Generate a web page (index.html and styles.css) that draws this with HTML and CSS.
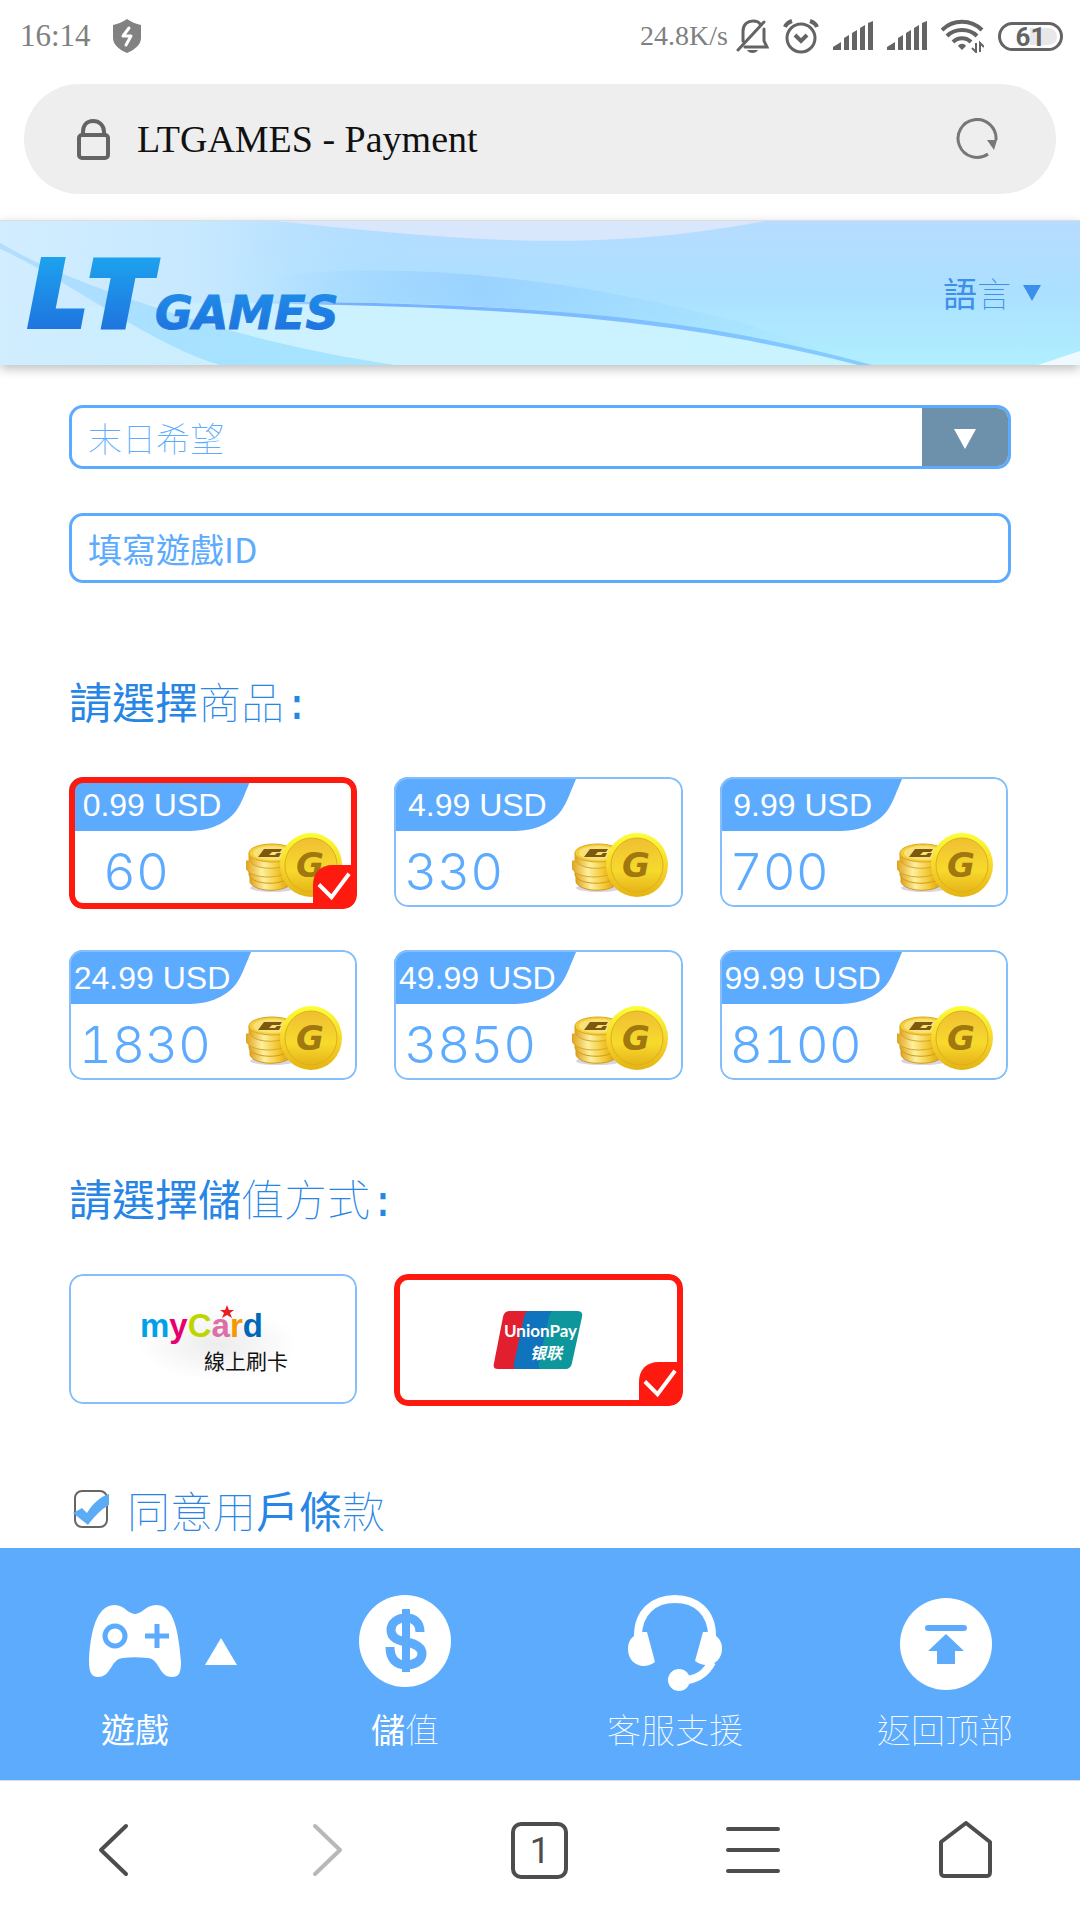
FILE: index.html
```
<!DOCTYPE html>
<html lang="zh-Hant">

<head>
  <meta charset="UTF-8">
  <meta name="viewport" content="width=device-width, initial-scale=1.0">
  <title>LTGAMES - Payment</title>
  <link rel="stylesheet" href="styles.css">
</head>

<body>
  <!-- Shared icons -->
  <svg class="sprite" aria-hidden="true">
    <defs>
      <linearGradient id="coin-rim" x1="0" y1="0" x2="0" y2="1">
        <stop offset="0" stop-color="#fbff35" />
        <stop offset="0.6" stop-color="#f5d02a" />
        <stop offset="1" stop-color="#e3b410" />
      </linearGradient>
      <linearGradient id="coin-face" x1="0" y1="0" x2="0" y2="1">
        <stop offset="0" stop-color="#efbf33" />
        <stop offset="0.6" stop-color="#f7da2c" />
        <stop offset="1" stop-color="#e6b41a" />
      </linearGradient>
      <linearGradient id="coin-side" x1="0" y1="0" x2="1" y2="0">
        <stop offset="0" stop-color="#e0a21c" />
        <stop offset="0.35" stop-color="#fdf0a0" />
        <stop offset="0.7" stop-color="#f2c62e" />
        <stop offset="1" stop-color="#d39412" />
      </linearGradient>
    </defs>
    <symbol id="tab" viewBox="0 0 183 54">
      <path d="M0 0H183C177 13 173 26 167 34C155 49 137 54 118 54H0Z" fill="#5cabfe" />
    </symbol>
    <symbol id="coins" viewBox="0 0 96 66">
      <ellipse cx="27" cy="56" rx="23" ry="4" fill="#d8d4e4" />
      <path d="M4 43V50C8 61 42 61 46 50V43Z" fill="url(#coin-side)" stroke="#d09a1c" stroke-width="1" />
      <path d="M3 36V43C7 54 41 54 45 43V36Z" fill="url(#coin-side)" stroke="#d09a1c" stroke-width="1" />
      <path d="M0 29V36C4 48 40 48 45 36V29Z" fill="url(#coin-side)" stroke="#d9a626" stroke-width="1" />
      <path d="M3 21V28C7 39 41 39 46 28V21Z" fill="url(#coin-side)" stroke="#d9a626" stroke-width="1" />
      <ellipse cx="26" cy="21" rx="23" ry="9" fill="#f5cf3a" stroke="#dca51d" stroke-width="1" />
      <ellipse cx="26" cy="21" rx="19" ry="7" fill="#f9e17a" />
      <path d="M18 17H36L34 20H26L23 23H29L31 21H35L33 25H12Z" fill="#7c590d" />
      <ellipse cx="65" cy="33" rx="31" ry="32" fill="url(#coin-rim)" />
      <ellipse cx="65" cy="33" rx="26" ry="27" fill="url(#coin-face)" stroke="#dfae1c" stroke-width="1" />
    </symbol>
    <symbol id="picked" viewBox="0 0 40 40">
      <path d="M0 40V20C0 8 8 0 20 0H40V40Z" fill="#ff1a10" />
      <path d="M6 20L19 33L37 9" fill="none" stroke="#fff" stroke-width="4" />
    </symbol>
    <symbol id="signal" viewBox="0 0 40 30">
      <path d="M0 29V26L8 21V29ZM11 29V17L16 14V29ZM19 29V12L24 9V29ZM27 29V7L32 4V29ZM35 29V2L40 0V29Z" fill="#646464" />
    </symbol>
  </svg>

  <div class="status">
    <span class="status__time">16:14</span>
    <svg class="status__shield" viewBox="0 0 30 34">
      <path d="M15 0C19 3 24 5 29 6V19C29 26 22 31 15 34C8 31 1 26 1 19V6C6 5 11 3 15 0Z" fill="#828282" />
      <path d="M17 9L11 17H19L14 26" fill="none" stroke="#fff" stroke-width="3" stroke-linecap="round" stroke-linejoin="round" />
    </svg>
    <div class="status__right">
      <span class="status__speed">24.8K/s</span>
      <svg width="33" height="34" viewBox="0 0 33 34" fill="none" stroke="#646464" stroke-width="3">
        <path d="M7 22V12C7 5 12 2 17 2C20 2 23 3 24 5M28 10V22L31 28H9M2 31L28 3" stroke-linecap="round" />
        <path d="M11 31H22C20 35 13 35 11 31Z" fill="#646464" stroke="none" />
      </svg>
      <svg width="36" height="36" viewBox="0 0 36 36" fill="none" stroke="#646464" stroke-width="3">
        <circle cx="18" cy="20" r="14" />
        <path d="M12 17L18 23L24 17" stroke-width="4" />
        <path d="M2 9C3 6 6 4 9 3M27 3C30 4 33 6 34 9" stroke-width="4" />
      </svg>
      <svg width="40" height="30"><use href="#signal" /></svg>
      <svg width="40" height="30"><use href="#signal" /></svg>
      <svg width="43" height="34" viewBox="0 0 43 34" fill="none" stroke="#646464" stroke-width="4">
        <path d="M1 11C12 0 30 0 41 11M6 17C14 9 28 9 36 17M12 23C17 18 25 18 30 23" />
        <path d="M21 31L17 27C19 24 23 24 25 27Z" fill="#646464" stroke="none" />
        <path d="M35 24V33L31 29M39 33V24L43 28" stroke-width="2" />
      </svg>
      <span class="battery">61</span>
    </div>
  </div>

  <div class="address">
    <svg class="address__lock" viewBox="0 0 34 42" fill="none" stroke="#646464" stroke-width="4">
      <rect x="3" y="17" width="29" height="23" rx="3" />
      <path d="M7 17V14C7 7 11 3 17 3C23 3 28 7 28 14V17" />
    </svg>
    <span class="address__title">LTGAMES - Payment</span>
    <button class="address__reload" aria-label="Reload">
      <svg viewBox="0 0 42 42" fill="none">
        <path d="M32 36A19 19 0 1 1 40 22" stroke="#777" stroke-width="3" />
        <path d="M31 22H41L38 32Z" fill="#777" />
      </svg>
    </button>
  </div>

  <header class="header">
    <svg class="header__bg" viewBox="0 0 1080 145" preserveAspectRatio="none" aria-hidden="true">
      <defs>
        <linearGradient id="sky" x1="0" y1="0" x2="0" y2="1">
          <stop offset="0" stop-color="#b6dcff" />
          <stop offset="0.5" stop-color="#ace0ff" />
          <stop offset="1" stop-color="#b0efff" />
        </linearGradient>
        <linearGradient id="left-sky" x1="0" y1="0" x2="1" y2="0">
          <stop offset="0" stop-color="#d2edff" />
          <stop offset="0.5" stop-color="#c6e8ff" />
          <stop offset="1" stop-color="#acdeff" stop-opacity="0" />
        </linearGradient>
        <linearGradient id="pale" x1="0" y1="0" x2="1" y2="0">
          <stop offset="0" stop-color="#cdf1ff" stop-opacity="0.2" />
          <stop offset="0.35" stop-color="#cdf1ff" />
          <stop offset="1" stop-color="#c8f4ff" />
        </linearGradient>
        <linearGradient id="band" x1="0" y1="0" x2="1" y2="0">
          <stop offset="0" stop-color="#88c6ff" stop-opacity="0" />
          <stop offset="0.35" stop-color="#88c6ff" stop-opacity="0.5" />
          <stop offset="1" stop-color="#8fdcff" stop-opacity="0" />
        </linearGradient>
        <linearGradient id="edge" x1="0" y1="0" x2="1" y2="0">
          <stop offset="0" stop-color="#76b0ff" stop-opacity="0" />
          <stop offset="0.15" stop-color="#76b0ff" />
          <stop offset="1" stop-color="#86ccff" />
        </linearGradient>
        <linearGradient id="streak" x1="0" y1="0" x2="1" y2="1">
          <stop offset="0" stop-color="#9dd3ff" />
          <stop offset="1" stop-color="#8adcff" />
        </linearGradient>
      </defs>
      <rect width="1080" height="145" fill="url(#sky)" />
      <rect width="420" height="145" fill="url(#left-sky)" />
      <path d="M275 0C390 12 470 20 560 20C650 19 710 10 765 0Z" fill="#d9e7fd" />
      <path d="M270 56C430 36 620 68 750 105L870 145C700 98 520 82 270 82Z" fill="url(#band)" />
      <path d="M0 92C90 83 210 82 340 82C540 84 700 100 870 145H0Z" fill="url(#pale)" />
      <path d="M250 81C540 82 702 98 872 145H858C700 104 540 86 250 83Z" fill="url(#edge)" />
      <path d="M0 22C50 52 110 72 170 92C250 118 320 134 395 145H220C150 125 70 60 0 28Z" fill="url(#streak)" opacity="0.6" />
      <path d="M1038 145L1080 131V145Z" fill="#eefaff" />
    </svg>
    <a class="header__logo" href="#">
      <svg viewBox="0 0 330 78" role="img" aria-label="LT GAMES">
        <defs>
          <linearGradient id="logo-fill" gradientUnits="userSpaceOnUse" x1="0" y1="2" x2="0" y2="76">
            <stop offset="0" stop-color="#1da3ee" />
            <stop offset="1" stop-color="#1f74df" />
          </linearGradient>
        </defs>
        <text x="4" y="71" class="logo-big">L</text>
        <text x="64" y="71" class="logo-big">T</text>
        <text x="129" y="75" class="logo-small">GAMES</text>
      </svg>
    </a>
    <button class="header__lang"><span>語<span class="thin">言</span></span>
      <svg width="18" height="16" viewBox="0 0 18 16"><path d="M0 0H18L9 16Z" fill="#3c8fea" /></svg>
    </button>
  </header>

  <main class="main">
    <form class="form">
      <div class="field field--select">
        <select class="field__control thin" aria-label="遊戲">
          <option>末日希望</option>
        </select>
        <span class="field__arrow">
          <svg width="22" height="20" viewBox="0 0 22 20"><path d="M0 0H22L11 20Z" fill="#fff" /></svg>
        </span>
      </div>
      <div class="field">
        <input class="field__control" type="text" placeholder="填寫遊戲ID" aria-label="填寫遊戲ID">
      </div>

      <h2 class="title">請選擇<span class="thin">商品</span><span class="colon">:</span></h2>
      <div class="cards">
        <label class="card">
          <input type="radio" name="product" checked>
          <svg class="card__tab"><use href="#tab" /></svg>
          <span class="card__price">0.99 USD</span>
          <span class="card__amount card__amount--short">60</span>
          <svg class="card__coins"><use href="#coins" /><text x="50" y="45">G</text></svg>
          <svg class="card__picked"><use href="#picked" /></svg>
        </label>
        <label class="card">
          <input type="radio" name="product">
          <svg class="card__tab"><use href="#tab" /></svg>
          <span class="card__price">4.99 USD</span>
          <span class="card__amount">330</span>
          <svg class="card__coins"><use href="#coins" /><text x="50" y="45">G</text></svg>
          <svg class="card__picked"><use href="#picked" /></svg>
        </label>
        <label class="card">
          <input type="radio" name="product">
          <svg class="card__tab"><use href="#tab" /></svg>
          <span class="card__price">9.99 USD</span>
          <span class="card__amount">700</span>
          <svg class="card__coins"><use href="#coins" /><text x="50" y="45">G</text></svg>
          <svg class="card__picked"><use href="#picked" /></svg>
        </label>
        <label class="card">
          <input type="radio" name="product">
          <svg class="card__tab"><use href="#tab" /></svg>
          <span class="card__price">24.99 USD</span>
          <span class="card__amount">1830</span>
          <svg class="card__coins"><use href="#coins" /><text x="50" y="45">G</text></svg>
          <svg class="card__picked"><use href="#picked" /></svg>
        </label>
        <label class="card">
          <input type="radio" name="product">
          <svg class="card__tab"><use href="#tab" /></svg>
          <span class="card__price">49.99 USD</span>
          <span class="card__amount">3850</span>
          <svg class="card__coins"><use href="#coins" /><text x="50" y="45">G</text></svg>
          <svg class="card__picked"><use href="#picked" /></svg>
        </label>
        <label class="card">
          <input type="radio" name="product">
          <svg class="card__tab"><use href="#tab" /></svg>
          <span class="card__price">99.99 USD</span>
          <span class="card__amount">8100</span>
          <svg class="card__coins"><use href="#coins" /><text x="50" y="45">G</text></svg>
          <svg class="card__picked"><use href="#picked" /></svg>
        </label>
      </div>

      <h2 class="title">請選擇儲<span class="thin">值方式</span><span class="colon">:</span></h2>
      <div class="cards">
        <label class="card card--pay">
          <input type="radio" name="payment">
          <svg width="170" height="86" viewBox="0 0 170 86" role="img" aria-label="MyCard 線上刷卡">
            <defs>
              <radialGradient id="haze">
                <stop offset="0" stop-color="#ececec" />
                <stop offset="1" stop-color="#fff" />
              </radialGradient>
            </defs>
            <ellipse cx="90" cy="48" rx="80" ry="36" fill="url(#haze)" />
            <text x="12" y="41" class="mycard"><tspan fill="#00a1e9">m</tspan><tspan fill="#e5006e">y</tspan><tspan fill="#bed600">C</tspan><tspan fill="#dd6fa8">a</tspan><tspan fill="#f39800">r</tspan><tspan fill="#0068b7">d</tspan></text>
            <path d="M99 9L101 14H106L102 17L104 22L99 19L94 22L96 17L92 14H97Z" fill="#ee1c24" />
            <text x="76" y="73" class="mycard-sub">線上刷卡</text>
          </svg>
          <svg class="card__picked"><use href="#picked" /></svg>
        </label>
        <label class="card card--pay">
          <input type="radio" name="payment" checked>
          <svg width="92" height="60" viewBox="0 0 92 60" role="img" aria-label="UnionPay">
            <path d="M18 1H50L36 59H6C2 59 1 57 2 53L11 7C12 3 14 1 18 1Z" fill="#e21f2f" />
            <path d="M38 1H70L56 59H26C22 59 21 57 22 53L32 7C33 3 34 1 38 1Z" fill="#0f73be" />
            <path d="M63 1H85C89 1 91 3 90 7L80 53C79 57 77 59 73 59H51C47 59 46 57 47 53L57 7C58 3 59 1 63 1Z" fill="#0d979c" />
            <text x="12" y="27" class="union">UnionPay</text>
            <text x="38" y="49" class="union-cn">银联</text>
          </svg>
          <svg class="card__picked"><use href="#picked" /></svg>
        </label>
      </div>

      <label class="terms">
        <input type="checkbox" checked>
        <svg class="terms__box" viewBox="0 0 38 40">
          <rect x="3" y="2" width="32" height="36" rx="7" fill="#fff" stroke="#666" stroke-width="2" />
          <path d="M1 24L10 19L15 24C21 14 28 8 37 5V16C28 21 22 28 16 36Z" fill="#5cabf5" />
        </svg>
        <span><span class="thin">同意用</span>戶條<span class="thin">款</span></span>
      </label>
    </form>
  </main>

  <nav class="menu">
    <a class="menu__item" href="#">
      <span class="menu__icon">
        <svg width="94" height="94" viewBox="0 0 94 94">
          <path d="M27 11C36 11 40 20 47 20C54 20 58 11 68 11C83 11 90 28 93 68C93 79 91 83 84 83C70 83 72 64 59 64C51 63 43 63 35 64C22 65 24 83 10 83C3 83 1 78 1 66C3 28 12 11 27 11Z" fill="#fff" />
          <circle cx="27" cy="42" r="10" fill="none" stroke="#5cabfc" stroke-width="5" />
          <path d="M57 42H81M69 30V54" stroke="#5cabfc" stroke-width="5" />
        </svg>
        <svg class="menu__caret" viewBox="0 0 32 27"><path d="M16 0L32 27H0Z" fill="#fff" /></svg>
      </span>
      <span>遊戲</span>
    </a>
    <a class="menu__item" href="#">
      <span class="menu__icon">
        <svg width="94" height="94" viewBox="0 0 94 94">
          <circle cx="47" cy="47" r="46" fill="#fff" />
          <path d="M48 15V78" stroke="#5cabfc" stroke-width="8" />
          <path d="M62 38C62 28 56 24 48 24C39 24 33 29 33 36C33 43 38 46 48 48C59 50 64 54 64 60C64 66 58 71 48 71C38 71 32 65 32 53" fill="none" stroke="#5cabfc" stroke-width="9" />
        </svg>
      </span>
      <span>儲<span class="thin">值</span></span>
    </a>
    <a class="menu__item thin" href="#">
      <span class="menu__icon">
        <svg width="94" height="98" viewBox="0 0 94 98">
          <path d="M10 42C10 18 26 5 47 5C68 5 84 18 84 42M84 68C78 79 71 84 60 86" fill="none" stroke="#fff" stroke-width="8" />
          <path d="M6 42L7 38H19L27 68C15 77 0 70 0 55C0 49 2 45 6 42ZM88 42L87 38H75L67 67C79 76 94 69 94 55C94 49 92 45 88 42Z" fill="#fff" />
          <circle cx="51" cy="86" r="11" fill="#fff" />
        </svg>
      </span>
      <span>客服支援</span>
    </a>
    <a class="menu__item thin" href="#">
      <span class="menu__icon">
        <svg width="94" height="98" viewBox="0 0 94 98">
          <circle cx="48" cy="50" r="46" fill="#fff" />
          <path d="M30 34H66" stroke="#5cabfc" stroke-width="6" stroke-linecap="round" />
          <path d="M48 40L66 57H57V70H39V57H30Z" fill="#5cabfc" />
        </svg>
      </span>
      <span>返回顶部</span>
    </a>
  </nav>

  <div class="browser">
    <button aria-label="Back">
      <svg width="60" height="60" viewBox="0 0 60 60"><path d="M42 5L17 29L42 53" /></svg>
    </button>
    <button class="is-off" aria-label="Forward">
      <svg width="60" height="60" viewBox="0 0 60 60"><path d="M18 5L43 29L18 53" /></svg>
    </button>
    <button aria-label="Tabs"><span class="browser__tabs">1</span></button>
    <button aria-label="Menu">
      <svg width="60" height="60" viewBox="0 0 60 60"><path d="M5 8H55M5 29H55M5 50H55" /></svg>
    </button>
    <button aria-label="Home">
      <svg width="60" height="60" viewBox="0 0 60 60"><path d="M5 21L30 2L54 21V51C54 54 53 55 50 55H9C6 55 5 54 5 51Z" /></svg>
    </button>
  </div>
</body>

</html>
```
FILE: styles.css
```
*,
*::before,
*::after {
  box-sizing: border-box;
}

body {
  display: flex;
  flex-direction: column;
  min-height: 100vh;
  margin: 0;
  background-color: #fff;
  color: #2785e6;
  font-family: "Noto Sans CJK TC", sans-serif;
}

h2 {
  margin: 0;
}

a {
  color: inherit;
  text-decoration: none;
}

button,
input,
select {
  border: 0;
  padding: 0;
  background-color: transparent;
  color: inherit;
  font-family: inherit;
}

svg {
  display: block;
  flex-shrink: 0;
}

.thin {
  font-weight: 100;
}

.sprite {
  position: absolute;
  width: 0;
  height: 0;
}

/* Status bar */

.status {
  display: flex;
  align-items: center;
  height: 84px;
  padding: 0 17px 12px 20px;
  color: #808080;
  font-family: "Liberation Serif", serif;
}

.status__time {
  font-size: 31px;
}

.status__shield {
  width: 30px;
  height: 34px;
  margin-left: 21px;
}

.status__right {
  display: flex;
  align-items: center;
  gap: 14px;
  margin-left: auto;
}

.status__speed {
  margin-right: -6px;
  font-size: 28px;
}

.battery {
  width: 65px;
  height: 29px;
  border: 3px solid #646464;
  border-radius: 15px;
  background: linear-gradient(to right, #fff 50%, #e8e8e8 50%) content-box;
  padding: 3px;
  color: #646464;
  font-family: Roboto, sans-serif;
  font-size: 26px;
  font-weight: 700;
  line-height: 18px;
  text-align: center;
}

/* Address bar */

.address {
  display: flex;
  align-items: center;
  height: 110px;
  margin: 0 24px 26px;
  padding: 0 58px 0 52px;
  border-radius: 55px;
  background-color: #eee;
}

.address__lock {
  width: 34px;
  height: 42px;
}

.address__title {
  margin-left: 27px;
  color: #111;
  font-family: "Liberation Serif", serif;
  font-size: 38px;
}

.address__reload {
  margin-left: auto;
}

.address__reload svg {
  width: 42px;
  height: 42px;
}

/* Site header */

.header {
  position: relative;
  display: flex;
  align-items: center;
  justify-content: space-between;
  height: 145px;
  padding: 0 39px 0 26px;
  border-top: 1px solid #ddd;
  box-shadow: 0 4px 10px rgba(0, 0, 0, 0.25);
}

.header__bg {
  position: absolute;
  top: 0;
  left: 0;
  width: 100%;
  height: 100%;
}

.header__logo,
.header__lang {
  position: relative;
}

.header__logo svg {
  width: 330px;
  height: 78px;
  overflow: visible;
}

.logo-big,
.logo-small {
  fill: url(#logo-fill);
  stroke: url(#logo-fill);
  font-family: "DejaVu Sans", sans-serif;
  font-style: italic;
  font-weight: 700;
}

.logo-big {
  font-size: 88px;
  stroke-width: 8px;
}

.logo-small {
  font-size: 46px;
  stroke-width: 1px;
}

.header__lang {
  display: flex;
  align-items: center;
  gap: 12px;
  color: #3c8fea;
  font-size: 34px;
  line-height: 44px;
}

/* Form */

.main {
  flex: 1;
  padding: 40px 69px 8px;
}

.field {
  display: flex;
  height: 70px;
  border: 3px solid #5cabfe;
  border-radius: 14px;
  overflow: hidden;
  color: #5cabfe;
}

.field--select {
  height: 64px;
  margin-bottom: 44px;
}

.field__control {
  flex: 1;
  min-width: 0;
  padding: 0 16px;
  outline: none;
  appearance: none;
  font-size: 34px;
}

.field__control::placeholder {
  color: #5cabfe;
}

.field__arrow {
  display: flex;
  align-items: center;
  justify-content: center;
  width: 86px;
  padding-top: 4px;
  background-color: #6d91ab;
}

.title {
  margin: 87px 0 47px;
  font-size: 43px;
  font-weight: 400;
  line-height: 60px;
}

.colon {
  font-family: "Liberation Mono", monospace;
  line-height: 1;
}

.cards {
  display: grid;
  grid-template-columns: repeat(3, 1fr);
  gap: 43px 37px;
  margin-right: 3px;
}

.card {
  position: relative;
  display: flex;
  flex-direction: column;
  height: 130px;
  border-radius: 14px;
  overflow: hidden;
  font-family: "Liberation Sans", sans-serif;
}

.card::after {
  position: absolute;
  top: 0;
  right: 0;
  bottom: 0;
  left: 0;
  border: 2px solid #84bffb;
  border-radius: 14px;
  content: "";
}

.card:has(input:checked) {
  height: 132px;
  margin-bottom: -2px;
}

.card:has(input:checked)::after {
  border: 6px solid #ff1a10;
}

.card input,
.terms input {
  position: absolute;
  opacity: 0;
}

.card__tab {
  position: absolute;
  top: 0;
  left: 0;
  width: 183px;
  height: 54px;
}

.card__price {
  position: relative;
  width: 166px;
  color: #fff;
  font-size: 32px;
  line-height: 56px;
  text-align: center;
}

.card__amount {
  padding-left: 10px;
  color: #5cabfe;
  font-family: Inter, sans-serif;
  font-size: 51px;
  font-variant-numeric: tabular-nums;
  font-weight: 300;
  line-height: 78px;
}

.card__amount--short {
  padding-left: 34px;
}

.card__coins {
  position: absolute;
  top: 55px;
  right: 15px;
  width: 96px;
  height: 66px;
  fill: #a1770f;
  font-family: "DejaVu Sans", sans-serif;
  font-size: 34px;
  font-style: italic;
  font-weight: 700;
}

.card__picked {
  position: absolute;
  right: 5px;
  bottom: 5px;
  display: none;
  width: 39px;
  height: 39px;
}

.card input:checked ~ .card__picked {
  display: block;
}

.card--pay {
  align-items: center;
  justify-content: center;
}

.mycard {
  font-family: "Liberation Sans", sans-serif;
  font-size: 33px;
  font-weight: 700;
}

.mycard-sub {
  fill: #111;
  font-family: "Noto Sans CJK TC", sans-serif;
  font-size: 21px;
}

.union,
.union-cn {
  fill: #fff;
  font-family: Lato, sans-serif;
  font-size: 17px;
  font-weight: 700;
}

.union-cn {
  font-family: "Noto Sans CJK SC", sans-serif;
  font-size: 16px;
  font-style: italic;
}

.terms {
  display: flex;
  align-items: center;
  gap: 17px;
  margin-top: 75px;
  padding-left: 3px;
  font-size: 43px;
  line-height: 60px;
}

.terms__box {
  width: 38px;
  height: 40px;
}

/* Bottom menu */

.menu {
  display: grid;
  grid-template-columns: repeat(4, 1fr);
  height: 232px;
  background-color: #5cabfc;
  color: #fff;
  font-size: 34px;
  line-height: 50px;
}

.menu__item {
  display: flex;
  flex-direction: column;
  align-items: center;
  padding-top: 46px;
}

.menu__icon {
  position: relative;
  height: 98px;
  margin-bottom: 12px;
}

.menu__caret {
  position: absolute;
  right: -55px;
  bottom: 27px;
  width: 32px;
  height: 27px;
}

/* Browser toolbar */

.browser {
  display: grid;
  grid-template-columns: repeat(5, 1fr);
  height: 140px;
  padding: 0 7px;
  border-top: 1px solid #ddd;
}

.browser button {
  display: flex;
  align-items: center;
  justify-content: center;
}

.browser svg {
  fill: none;
  stroke: #4d4d4d;
  stroke-linecap: round;
  stroke-linejoin: round;
  stroke-width: 4px;
}

.browser .is-off svg {
  stroke: #b8b8b8;
}

.browser__tabs {
  width: 57px;
  height: 57px;
  border: 4px solid #4d4d4d;
  border-radius: 10px;
  color: #4d4d4d;
  font-family: Roboto, sans-serif;
  font-size: 36px;
  line-height: 51px;
}
```
